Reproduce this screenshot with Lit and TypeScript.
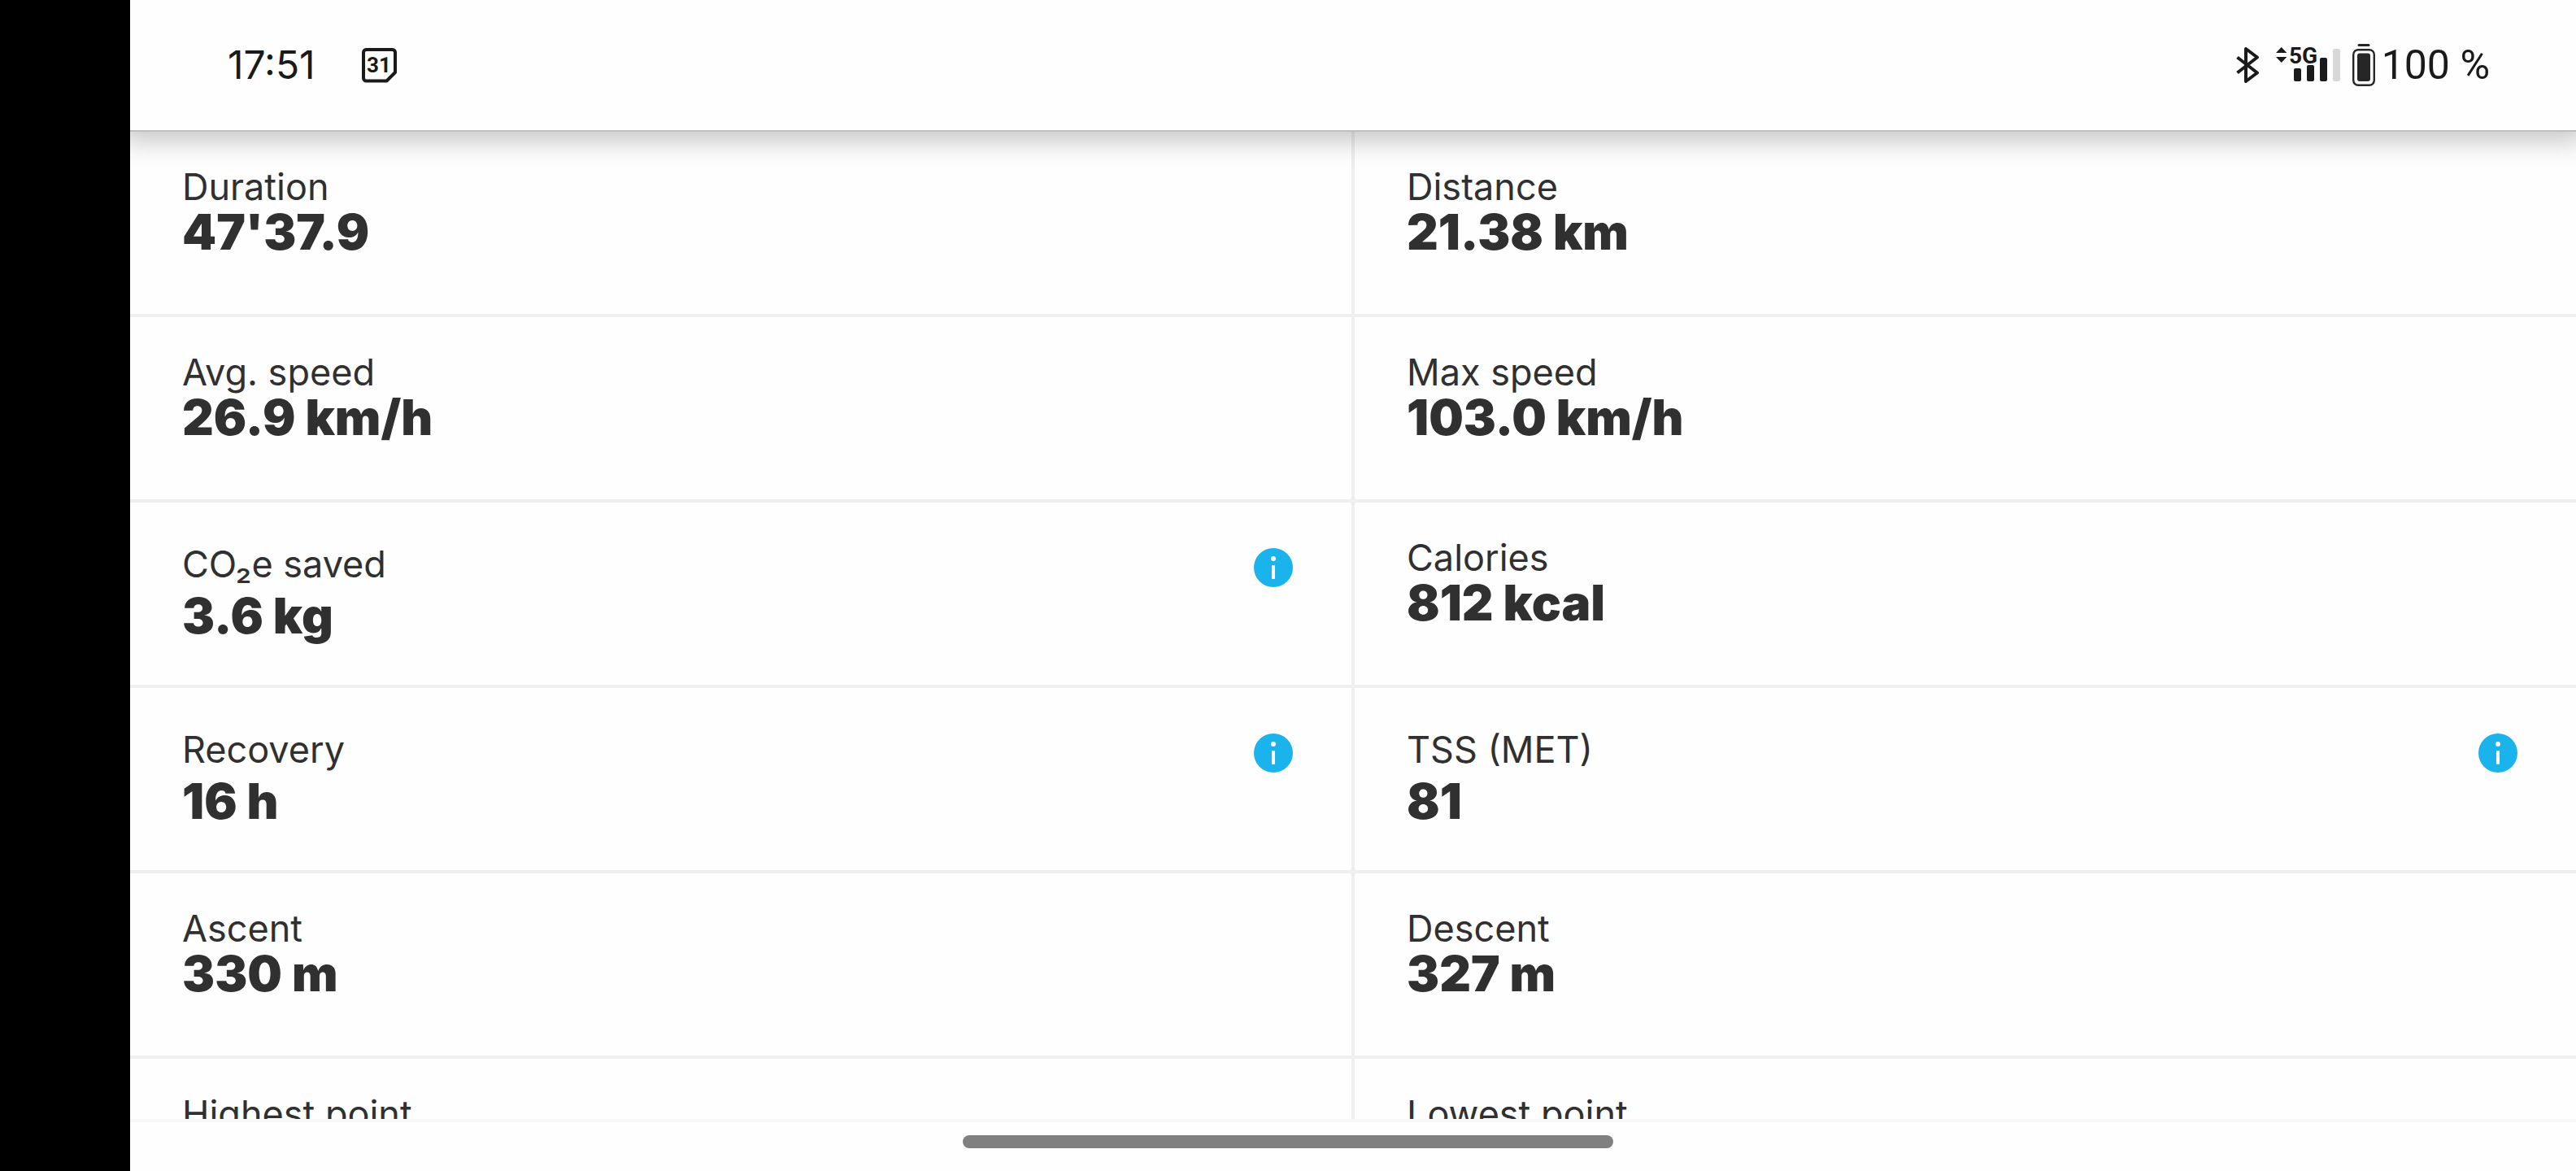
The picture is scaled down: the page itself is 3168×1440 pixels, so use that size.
import { LitElement, html, css, svg } from "lit";
import { customElement, property } from "lit/decorators.js";

interface Stat {
  label: string;
  value?: string;
  info?: boolean;
}

const STATS: Stat[] = [
  { label: "Duration", value: "47'37.9" },
  { label: "Distance", value: "21.38 km" },
  { label: "Avg. speed", value: "26.9 km/h" },
  { label: "Max speed", value: "103.0 km/h" },
  { label: "CO₂e saved", value: "3.6 kg", info: true },
  { label: "Calories", value: "812 kcal" },
  { label: "Recovery", value: "16 h", info: true },
  { label: "TSS (MET)", value: "81", info: true },
  { label: "Ascent", value: "330 m" },
  { label: "Descent", value: "327 m" },
  { label: "Highest point" },
  { label: "Lowest point" },
];

@customElement("stat-cell")
export class StatCell extends LitElement {
  @property({ attribute: false }) stat!: Stat;

  static styles = css`
    :host {
      display: block;
      background: #fefefe;
      color: #303030;
    }
    .cell {
      display: flex;
      justify-content: space-between;
      align-items: flex-start;
      padding: 40px 64px 0;
    }
    .cell.with-info {
      padding-top: 48px;
    }
    .text {
      display: flex;
      flex-direction: column;
    }
    .with-info .text {
      gap: 8px;
    }
    .label,
    .value {
      margin: 0;
      white-space: nowrap;
    }
    .label {
      font-size: 45px;
      line-height: 56px;
      font-weight: 400;
    }
    .value {
      font-size: 60px;
      line-height: 54px;
      font-weight: 900;
    }
    .info {
      display: block;
      padding: 8px;
      border: 0;
      background: none;
      cursor: pointer;
    }
    .info-icon {
      display: block;
      width: 48px;
      height: 48px;
    }
  `;

  render() {
    const { label, value, info } = this.stat;
    return html`
      <div class=${info ? "cell with-info" : "cell"}>
        <div class="text">
          <p class="label">${label}</p>
          ${value ? html`<p class="value">${value}</p>` : null}
        </div>
        ${info
          ? html`<button class="info" type="button" aria-label="About ${label}">
              <svg class="info-icon" viewBox="0 0 48 48" aria-hidden="true">
                <circle cx="24" cy="24" r="24" fill="#1ab3ec" />
                <circle cx="24" cy="13" r="3" fill="#fff" />
                <rect x="22" y="21" width="4" height="17" fill="#fff" />
              </svg>
            </button>`
          : null}
      </div>
    `;
  }
}

@customElement("status-bar")
export class StatusBar extends LitElement {
  static styles = css`
    :host {
      display: flex;
      justify-content: space-between;
      align-items: center;
      padding: 0 106px 0 120px;
      color: #1a1a1a;
      font-size: 48px;
      line-height: 56px;
    }
    .group {
      display: flex;
      align-items: center;
    }
    .start {
      gap: 56px;
    }
    .end {
      gap: 20px;
    }
    .link {
      display: flex;
      align-items: center;
      gap: 14px;
    }
    .power {
      display: flex;
      align-items: center;
      gap: 8px;
    }
    .level {
      font-family: "Roboto", sans-serif;
      font-size: 50px;
    }
    .icon {
      display: block;
      flex: none;
      overflow: visible;
    }
    .day {
      font: 700 26px "Roboto", sans-serif;
    }
    .network {
      font: 700 28px "Roboto", sans-serif;
    }
  `;

  render() {
    const bars = [
      [22, 28, "#1a1a1a"],
      [38, 24, "#1a1a1a"],
      [54, 15, "#1a1a1a"],
      [70, 4, "#d8d8d8"],
    ] as const;
    return html`
      <div class="group start">
        <time>17:51</time>
        <svg class="icon" width="44" height="44" viewBox="0 0 44 44" aria-hidden="true">
          <path
            d="M6 3H38.500a3.500 3.500 0 0 1 3.500 3.500V31L31.500 41.500H6.500A3.500 3.500 0 0 1 3 38V6.500A3.500 3.500 0 0 1 6.500 3Z"
            fill="none"
            stroke="#1a1a1a"
            stroke-width="4"
            stroke-linejoin="round"
          />
          <text class="day" x="22" y="31" text-anchor="middle" fill="#1a1a1a">31</text>
        </svg>
      </div>
      <div class="group end">
        <svg class="icon" width="30" height="48" viewBox="0 0 30 48" aria-hidden="true">
          <path
            d="M2.500 14.500L27 33.500L13 44V4L27 14.500L2.500 33.500"
            fill="none"
            stroke="#1a1a1a"
            stroke-width="4"
            stroke-linejoin="round"
          />
        </svg>
        <div class="link">
          <svg class="icon" width="80" height="48" viewBox="0 0 80 48" aria-hidden="true">
            <path d="M0 9L6.700 2L13.400 9ZM0 14H13.400L6.700 21Z" fill="#1a1a1a" />
            <text class="network" x="16" y="22" fill="#1a1a1a">5G</text>
            ${bars.map(
              ([x, y, fill]) =>
                svg`<rect x=${x} y=${y} width="9" height=${44 - y} rx="2" fill=${fill} />`
            )}
          </svg>
          <div class="power">
            <svg class="icon" width="28" height="52" viewBox="0 0 28 52" aria-hidden="true">
              <rect x="6.500" y="0" width="15" height="3" rx="1.500" fill="#262626" />
              <rect x="1.200" y="7.200" width="25.600" height="43.600" rx="6" fill="none" stroke="#262626" stroke-width="2.400" />
              <rect x="6" y="11.500" width="16" height="34.500" rx="3" fill="#262626" />
            </svg>
            <span class="level">100 %</span>
          </div>
        </div>
      </div>
    `;
  }
}

@customElement("app-root")
export class AppRoot extends LitElement {
  static styles = css`
    :host {
      display: flex;
      height: 100vh;
      overflow: hidden;
      background: #fefefe;
      font-family: "Inter", "Liberation Sans", sans-serif;
    }
    .cutout {
      flex: none;
      width: 160px;
      background: #000;
    }
    .screen {
      flex: 1;
      min-width: 0;
      display: flex;
      flex-direction: column;
    }
    .status {
      flex: none;
      height: 160px;
      background: #fefefe;
      border-bottom: 2px solid #bfbfbf;
      box-shadow: 0 0 30px 12px rgba(0, 0, 0, 0.22);
      z-index: 1;
    }
    .stats {
      flex: 1;
      min-height: 0;
      overflow: hidden;
      display: grid;
      grid-template-columns: 1fr 1fr;
      grid-auto-rows: 224px;
      gap: 4px;
      background: #efefef;
    }
    .nav {
      flex: none;
      display: flex;
      justify-content: center;
      padding: 16px 160px 28px 0;
      border-top: 4px solid #f8f8f8;
      z-index: 1;
    }
    .handle {
      width: 800px;
      height: 16px;
      border-radius: 8px;
      background: #808080;
    }
  `;

  render() {
    return html`
      <div class="cutout"></div>
      <div class="screen">
        <status-bar class="status"></status-bar>
        <main class="stats">
          ${STATS.map((stat) => html`<stat-cell .stat=${stat}></stat-cell>`)}
        </main>
        <footer class="nav"><div class="handle"></div></footer>
      </div>
    `;
  }
}
